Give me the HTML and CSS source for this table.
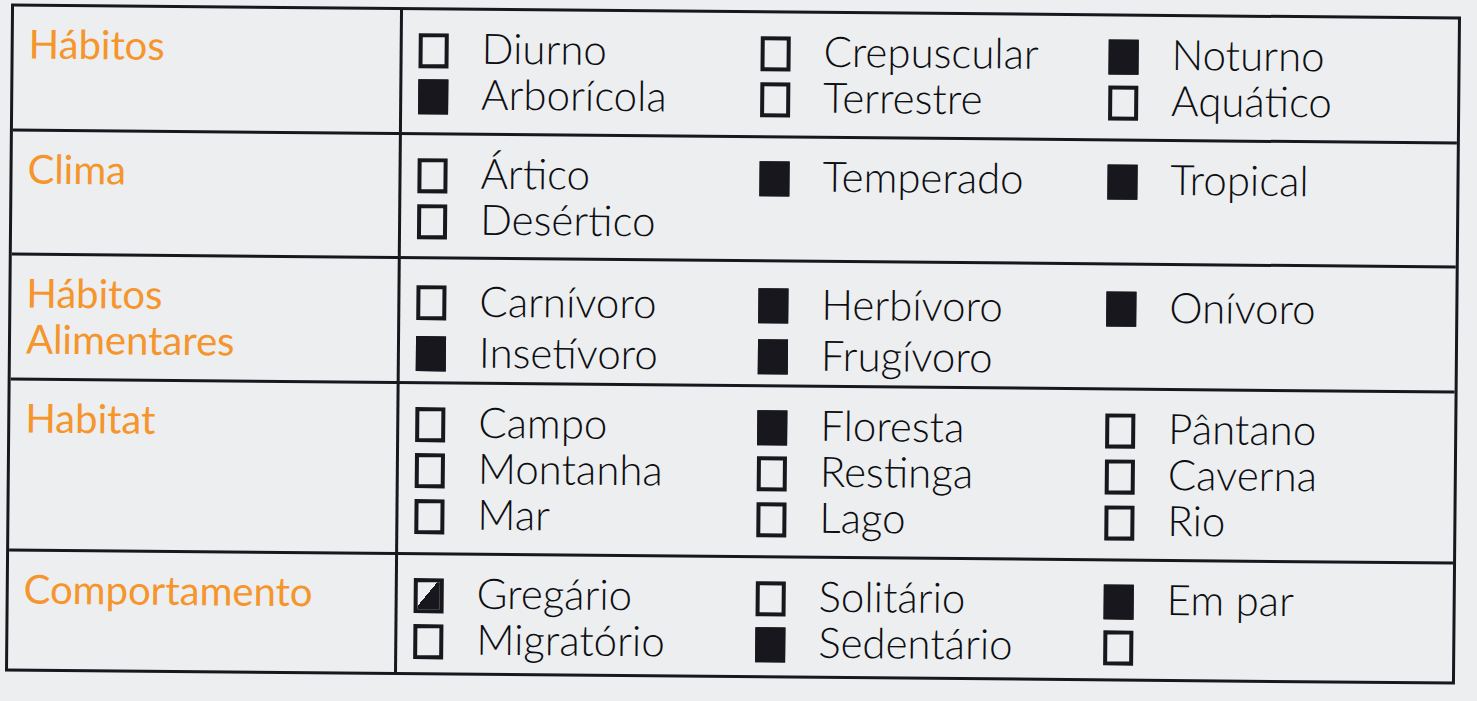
FILE: index.html
```html
<!DOCTYPE html>
<html lang="pt">
<head>
<meta charset="utf-8">
<title>Ficha</title>
<link rel="stylesheet" href="styles.css">
</head>
<body>
<div class="sheet">
  <section class="row row--1">
    <div class="label">Hábitos</div>
    <div class="opts">
      <div class="opt"><span class="box"></span>Diurno</div>
      <div class="opt"><span class="box"></span>Crepuscular</div>
      <div class="opt"><span class="box box--on"></span>Noturno</div>
      <div class="opt"><span class="box box--on"></span>Arborícola</div>
      <div class="opt"><span class="box"></span>Terrestre</div>
      <div class="opt"><span class="box"></span>Aquático</div>
    </div>
  </section>
  <section class="row row--2">
    <div class="label">Clima</div>
    <div class="opts">
      <div class="opt"><span class="box"></span>Ártico</div>
      <div class="opt"><span class="box box--on"></span>Temperado</div>
      <div class="opt"><span class="box box--on"></span>Tropical</div>
      <div class="opt"><span class="box"></span>Desértico</div>
    </div>
  </section>
  <section class="row row--3">
    <div class="label">Hábitos<br>Alimentares</div>
    <div class="opts opts--loose">
      <div class="opt"><span class="box"></span>Carnívoro</div>
      <div class="opt"><span class="box box--on"></span>Herbívoro</div>
      <div class="opt"><span class="box box--on"></span>Onívoro</div>
      <div class="opt"><span class="box box--on"></span>Insetívoro</div>
      <div class="opt"><span class="box box--on"></span>Frugívoro</div>
    </div>
  </section>
  <section class="row row--4">
    <div class="label">Habitat</div>
    <div class="opts">
      <div class="opt"><span class="box"></span>Campo</div>
      <div class="opt"><span class="box box--on"></span>Floresta</div>
      <div class="opt"><span class="box"></span>Pântano</div>
      <div class="opt"><span class="box"></span>Montanha</div>
      <div class="opt"><span class="box"></span>Restinga</div>
      <div class="opt"><span class="box"></span>Caverna</div>
      <div class="opt"><span class="box"></span>Mar</div>
      <div class="opt"><span class="box"></span>Lago</div>
      <div class="opt"><span class="box"></span>Rio</div>
    </div>
  </section>
  <section class="row row--5">
    <div class="label">Comportamento</div>
    <div class="opts">
      <div class="opt"><span class="box box--half"></span>Gregário</div>
      <div class="opt"><span class="box"></span>Solitário</div>
      <div class="opt"><span class="box box--on"></span>Em par</div>
      <div class="opt"><span class="box"></span>Migratório</div>
      <div class="opt"><span class="box box--on"></span>Sedentário</div>
      <div class="opt"><span class="box"></span></div>
    </div>
  </section>
</div>
</body>
</html>
```
FILE: styles.css
```css
html, body {
  margin: 0;
  padding: 0;
  background: #eceef0;
}

body {
  width: 1477px;
  height: 701px;
  overflow: hidden;
  font-family: Lato, "Liberation Sans", sans-serif;
  color: #0e0e12;
}

.sheet {
  margin: 10px 0 0 8px;
  width: 1450px;
  border: 3px solid #17171d;
  box-sizing: border-box;
  display: grid;
  grid-template-rows: 125px 124px 125px 171px 117px;
  transform: rotate(0.52deg);
  transform-origin: 50% 50%;
}

.row {
  display: grid;
  grid-template-columns: 389px 1fr;
  border-bottom: 3px solid #17171d;
}

.row--5 {
  border-bottom: none;
}

.label {
  border-right: 3px solid #17171d;
  padding: 14px 0 0 15px;
  font-size: 40px;
  line-height: 46px;
  font-weight: 400;
  color: #f5952b;
}

.opts {
  display: grid;
  grid-template-columns: 342px 348px 1fr;
  grid-auto-rows: 46px;
  align-items: center;
  padding: 14px 0 0 16px;
}

.opts--loose {
  grid-auto-rows: 51px;
  padding-top: 15px;
}

.opt {
  display: flex;
  align-items: center;
  font-size: 42px;
  font-weight: 300;
  line-height: 46px;
  white-space: nowrap;
}

.box {
  flex: none;
  width: 30px;
  height: 35px;
  box-sizing: border-box;
  border: 4px solid #17171d;
  margin: 6px 33px 0 0;
}

.box--on {
  background: #17171d;
}

.box--half {
  background: linear-gradient(to bottom right, #eceef0 44%, #17171d 44%);
}
```
